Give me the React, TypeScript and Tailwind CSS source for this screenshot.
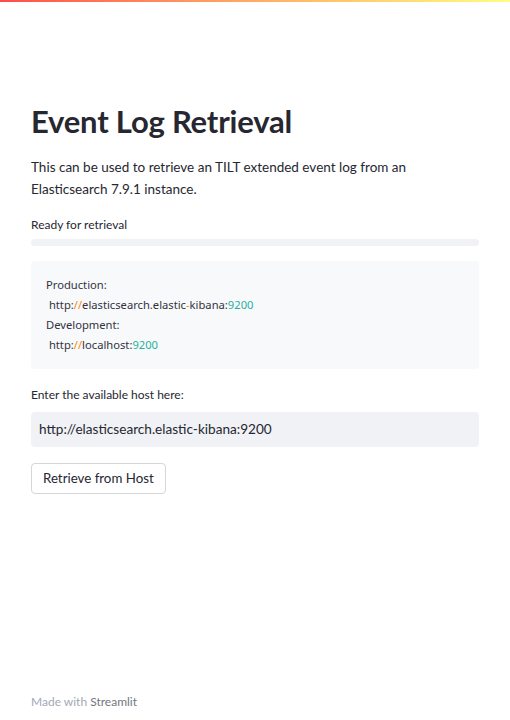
import React from "react";

export default function App() {
  const font = { fontFamily: '"Lato", "Liberation Sans", sans-serif' };
  return (
    <div className="relative w-[510px] h-[720px] bg-white text-[#262730]" style={font}>
      <div className="h-[2px] w-full bg-gradient-to-r from-[#ff4b4b] to-[#fffd80]" />
      <div className="px-[31px] pt-[99px] flex flex-col">
        <h1 className="text-[31px] leading-[40px] font-bold tracking-[-0.2px]">Event Log Retrieval</h1>
        <p className="mt-[15px] text-[13.5px] leading-[22px]">
          This can be used to retrieve an TILT extended event log from an
          <br />
          Elasticsearch 7.9.1 instance.
        </p>
        <div className="mt-[17px] text-[12px] leading-[16px]">Ready for retrieval</div>
        <div className="mt-[6px] h-[7px] w-full rounded-full bg-[#f0f2f6]" />
        <div
          className="mt-[15px] rounded-[4px] bg-[#f8f9fb] px-[15px] py-[14px] text-[11.2px] leading-[20px] text-[#31333f]"
          style={{ fontFamily: '"Noto Sans", "DejaVu Sans", sans-serif' }}
        >
          <div>Production:</div>
          <div>
            &nbsp;http:<span className="text-[#ff8700]">//</span>elasticsearch.elastic<span className="text-[#ff8700]">-</span>kibana:<span className="text-[#29b09d]">9200</span>
          </div>
          <div>Development:</div>
          <div>
            &nbsp;http:<span className="text-[#ff8700]">//</span>localhost:<span className="text-[#29b09d]">9200</span>
          </div>
        </div>
        <div className="mt-[18px] text-[12px] leading-[16px]">Enter the available host here:</div>
        <div className="mt-[9px] h-[35px] rounded-[4px] bg-[#f0f2f6] px-[8px] flex items-center text-[13.6px]">
          http://elasticsearch.elastic-kibana:9200
        </div>
        <div className="mt-[16px]">
          <button className="h-[31px] px-[11px] rounded-[4px] border border-[#d6d6d9] bg-white text-[13.3px] text-[#262730]">
            Retrieve from Host
          </button>
        </div>
      </div>
      <div className="absolute left-[31px] top-[693px] text-[12px] text-[#a3a8b4]">
        Made with <span className="text-[#737680]">Streamlit</span>
      </div>
    </div>
  );
}
